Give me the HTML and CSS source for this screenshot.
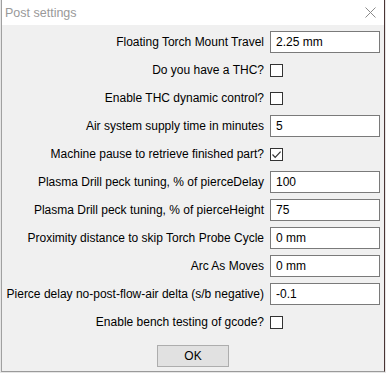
FILE: index.html
```html
<!DOCTYPE html>
<html lang="en">
<head>
    <meta charset="UTF-8">
    <title>Post settings</title>
    <link rel="stylesheet" href="styles.css">
</head>
<body>
    <div class="window">
        <div class="titlebar">
            <span class="title">Post settings</span>
            <svg class="close" width="11" height="11" viewBox="0 0 11 11">
                <path d="M0.5 0.5 L10.5 10.5 M10.5 0.5 L0.5 10.5" stroke="#8a8a8a" stroke-width="1" fill="none"/>
            </svg>
        </div>
        <form class="settings">
            <label>Floating Torch Mount Travel</label>
            <div class="field"><input type="text" value="2.25 mm"></div>

            <label>Do you have a THC?</label>
            <div class="field"><span class="check"></span></div>

            <label>Enable THC dynamic control?</label>
            <div class="field"><span class="check"></span></div>

            <label>Air system supply time in minutes</label>
            <div class="field"><input type="text" value="5"></div>

            <label>Machine pause to retrieve finished part?</label>
            <div class="field">
                <span class="check">
                    <svg width="11" height="11" viewBox="0 0 11 11">
                        <path d="M1.5 5.5 L4.2 8.3 L9.6 2.6" stroke="#333" stroke-width="1.2" fill="none"/>
                    </svg>
                </span>
            </div>

            <label>Plasma Drill peck tuning, % of pierceDelay</label>
            <div class="field"><input type="text" value="100"></div>

            <label>Plasma Drill peck tuning, % of pierceHeight</label>
            <div class="field"><input type="text" value="75"></div>

            <label>Proximity distance to skip Torch Probe Cycle</label>
            <div class="field"><input type="text" value="0 mm"></div>

            <label>Arc As Moves</label>
            <div class="field"><input type="text" value="0 mm"></div>

            <label>Pierce delay no-post-flow-air delta (s/b negative)</label>
            <div class="field"><input type="text" value="-0.1"></div>

            <label>Enable bench testing of gcode?</label>
            <div class="field"><span class="check"></span></div>
        </form>
        <div class="actions">
            <button type="button" class="btn">OK</button>
        </div>
    </div>
</body>
</html>
```

FILE: styles.css
```css
body {
    margin: 0;
    background-color: #e6e6e6;
    font-family: 'Liberation Sans', Arial, sans-serif;
    font-size: 12px;
    color: #000;
}
.window {
    margin-left: 1px;
    width: 382px;
    height: 371px;
    background-color: #f0f0f0;
    border-left: 1px solid #a0a0a0;
    border-right: 1px solid #4a3434;
    border-bottom: 1px solid #9a9a9a;
    display: flex;
    flex-direction: column;
}
.titlebar {
    height: 25px;
    background: white;
    display: flex;
    align-items: center;
    justify-content: space-between;
    padding: 0 8px 0 3px;
}
.title {
    color: #999;
    font-size: 12.5px;
    margin-top: 1px;
}
.close {
    margin-top: -1px;
}
.settings {
    display: grid;
    grid-template-columns: 1fr 110px;
    grid-auto-rows: 28px;
    column-gap: 6px;
    padding: 3px 4px 0 0;
    margin: 0;
}
label {
    text-align: right;
    align-self: center;
    white-space: nowrap;
}
.field {
    display: flex;
    align-items: center;
}
input[type="text"] {
    box-sizing: border-box;
    width: 110px;
    height: 22px;
    margin: 0;
    padding: 0 5px;
    border: 1px solid #7a7a7a;
    background: white;
    font-family: inherit;
    font-size: 12px;
    color: #000;
    outline: none;
}
.check {
    box-sizing: border-box;
    width: 13px;
    height: 13px;
    border: 1px solid #333;
    background: white;
    display: flex;
    align-items: center;
    justify-content: center;
}
.actions {
    display: flex;
    justify-content: center;
    padding-top: 9px;
}
.btn {
    box-sizing: border-box;
    width: 72px;
    height: 22px;
    background-color: #e1e1e1;
    border: 1px solid #adadad;
    font-family: inherit;
    font-size: 12px;
    color: #000;
    padding: 0;
}
```
